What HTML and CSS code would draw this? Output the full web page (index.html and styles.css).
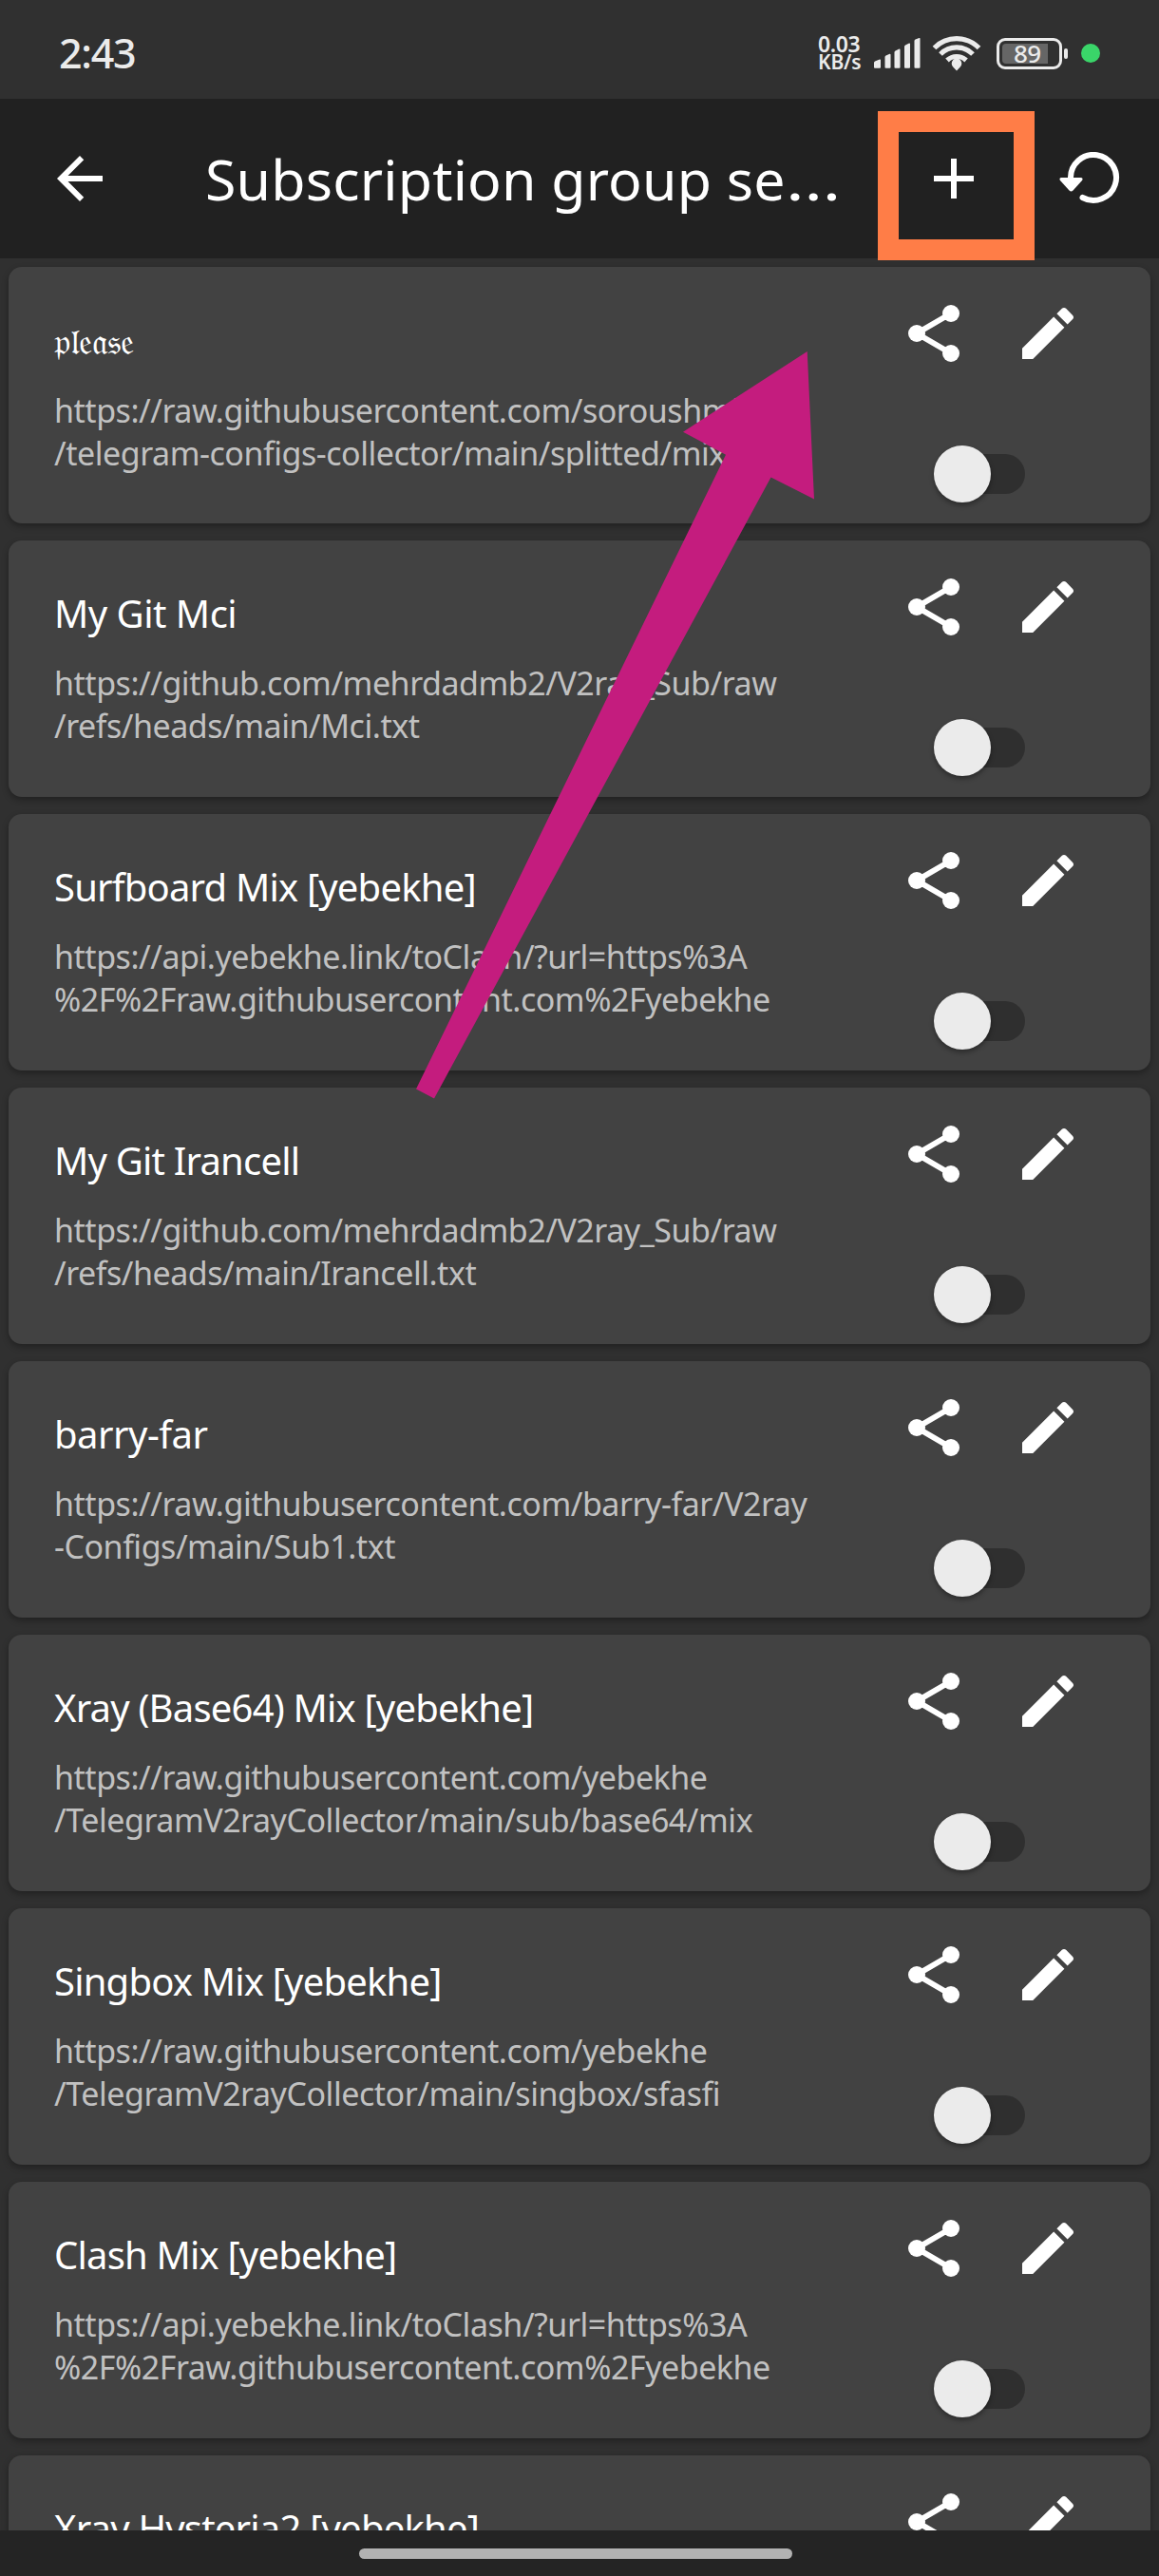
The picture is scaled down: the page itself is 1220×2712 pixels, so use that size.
FILE: index.html
```html
<!DOCTYPE html>
<html lang="en">
<head>
<meta charset="utf-8">
<title>Subscription group setting</title>
<link rel="stylesheet" href="styles.css">
</head>
<body>
<svg class="defs" aria-hidden="true">
  <symbol id="share" viewBox="0 0 24 24"><path d="M18 5L6 12l12 7" fill="none" stroke="currentColor" stroke-width="2"/><circle cx="18" cy="5" r="3"/><circle cx="6" cy="12" r="3"/><circle cx="18" cy="19" r="3"/></symbol>
  <symbol id="edit" viewBox="0 0 24 24"><path d="M3 17.250V21h3.750L17.810 9.940l-3.750-3.750L3 17.250zM20.710 7.040c.39-.39.39-1.020 0-1.410l-2.340-2.340c-.39-.39-1.020-.39-1.410 0l-1.830 1.830 3.750 3.750 1.830-1.830z"/></symbol>
</svg>

<div class="status">
  <span class="clock">2:43</span>
  <span class="speed"><span>0.03</span><span class="unit">KB/s</span></span>
  <svg class="signal" width="49" height="32" viewBox="0 0 49 32"><path d="M0 31v-5q0-1 1-1.500l5-2q1-.3 1 1V31q0 .8-1 .8H1Q0 31.800 0 31zM11.500 31V20q0-1 1-1.500l4-1.800q1-.3 1 1V31q0 .8-1 .8h-4q-1 0-1-.8zM21.500 31V15q0-1 1-1.500l4-2q1-.3 1 1V31q0 .8-1 .8h-4q-1 0-1-.8zM32 31V9q0-1 1-1.500l4-2q1-.3 1 1V31q0 .8-1 .8h-4q-1 0-1-.8zM42.500 31V3q0-1 1-1.500l4-1.500q1-.3 1 1V31q0 .8-1 .8h-4q-1 0-1-.8z"/></svg>
  <svg class="wifi" width="52" height="38" viewBox="0 0 52 38"><g fill="none" stroke="currentColor" stroke-width="5.200"><path d="M2.500 13.500a33 33 0 0 1 47 0"/><path d="M9 20a24 24 0 0 1 34 0"/><path d="M16 26.500a14.500 14.500 0 0 1 20 0"/></g><path d="M26 37.500l-4-4.200a5.300 5.300 0 1 1 8 0z"/></svg>
  <span class="battery"><span class="level">89</span></span>
  <span class="dot"></span>
</div>

<header class="bar">
  <svg class="icon back" viewBox="0 0 24 24"><path d="M20 11H7.830l5.590-5.590L12 4l-8 8 8 8 1.410-1.410L7.830 13H20v-2z"/></svg>
  <h1>Subscription group se<span class="dots">…</span></h1>
  <svg class="icon" viewBox="0 0 24 24"><path d="M19 13h-6v6h-2v-6H5v-2h6V5h2v6h6v2z"/></svg>
  <svg class="restore" width="64" height="56" viewBox="0 0 64 56"><path d="M12 28a24 24 0 1 1 12.500 20.500" fill="none" stroke="currentColor" stroke-width="6" stroke-linecap="round" transform="translate(0 -.5)"/><path d="M2 27h21q2.500.5 1 3l-9.500 10.500q-2 2-4 0L1 30q-1.500-2.500 1-3z"/></svg>
</header>

<main class="list">
  <article class="card">
    <div class="text"><h2 class="fraktur">𝔭𝔩𝔢𝔞𝔰𝔢</h2><p>https://raw.githubusercontent.com/soroushmi<br>/telegram-configs-collector/main/splitted/mix</p></div>
    <div class="actions"><svg class="icon"><use href="#share"/></svg><svg class="icon"><use href="#edit"/></svg><span class="toggle"></span></div>
  </article>
  <article class="card">
    <div class="text"><h2 class="loose">My Git Mci</h2><p>https://github.com/mehrdadmb2/V2ray_Sub/raw<br>/refs/heads/main/Mci.txt</p></div>
    <div class="actions"><svg class="icon"><use href="#share"/></svg><svg class="icon"><use href="#edit"/></svg><span class="toggle"></span></div>
  </article>
  <article class="card">
    <div class="text"><h2>Surfboard Mix [yebekhe]</h2><p>https://api.yebekhe.link/toClash/?url=https%3A<br>%2F%2Fraw.githubusercontent.com%2Fyebekhe</p></div>
    <div class="actions"><svg class="icon"><use href="#share"/></svg><svg class="icon"><use href="#edit"/></svg><span class="toggle"></span></div>
  </article>
  <article class="card">
    <div class="text"><h2>My Git Irancell</h2><p>https://github.com/mehrdadmb2/V2ray_Sub/raw<br>/refs/heads/main/Irancell.txt</p></div>
    <div class="actions"><svg class="icon"><use href="#share"/></svg><svg class="icon"><use href="#edit"/></svg><span class="toggle"></span></div>
  </article>
  <article class="card">
    <div class="text"><h2 class="loose">barry-far</h2><p>https://raw.githubusercontent.com/barry-far/V2ray<br>-Configs/main/Sub1.txt</p></div>
    <div class="actions"><svg class="icon"><use href="#share"/></svg><svg class="icon"><use href="#edit"/></svg><span class="toggle"></span></div>
  </article>
  <article class="card">
    <div class="text"><h2>Xray (Base64) Mix [yebekhe]</h2><p>https://raw.githubusercontent.com/yebekhe<br>/TelegramV2rayCollector/main/sub/base64/mix</p></div>
    <div class="actions"><svg class="icon"><use href="#share"/></svg><svg class="icon"><use href="#edit"/></svg><span class="toggle"></span></div>
  </article>
  <article class="card">
    <div class="text"><h2>Singbox Mix [yebekhe]</h2><p>https://raw.githubusercontent.com/yebekhe<br>/TelegramV2rayCollector/main/singbox/sfasfi</p></div>
    <div class="actions"><svg class="icon"><use href="#share"/></svg><svg class="icon"><use href="#edit"/></svg><span class="toggle"></span></div>
  </article>
  <article class="card">
    <div class="text"><h2>Clash Mix [yebekhe]</h2><p>https://api.yebekhe.link/toClash/?url=https%3A<br>%2F%2Fraw.githubusercontent.com%2Fyebekhe</p></div>
    <div class="actions"><svg class="icon"><use href="#share"/></svg><svg class="icon"><use href="#edit"/></svg><span class="toggle"></span></div>
  </article>
  <article class="card">
    <div class="text"><h2>Xray Hysteria2 [yebekhe]</h2></div>
    <div class="actions"><svg class="icon"><use href="#share"/></svg><svg class="icon"><use href="#edit"/></svg><span class="toggle"></span></div>
  </article>
</main>

<div class="nav"><span class="handle"></span></div>

<div class="highlight"></div>
<svg class="pointer" viewBox="438 370 419 787"><path d="M849.700 370L857 525.500l-45.500-23L457 1156.600l-19-10L764 478.700l-45-24z"/></svg>
</body>
</html>
```
FILE: styles.css
```css
* { box-sizing: border-box; margin: 0; padding: 0; }

body {
  position: relative;
  display: flex;
  flex-direction: column;
  width: 1220px;
  height: 2712px;
  overflow: hidden;
  background: #303030;
  color: #fff;
  font-family: "Noto Sans", sans-serif;
}

svg { display: block; flex: none; fill: currentColor; }
.defs { position: absolute; width: 0; height: 0; }
.icon { width: 72px; height: 72px; }

/* status bar */
.status {
  display: flex;
  align-items: center;
  flex: none;
  height: 104px;
  padding: 8px 62px 0 62px;
  color: #ebebeb;
}
.clock { flex: 1; font-size: 43px; line-height: 50px; font-weight: 500; letter-spacing: -1.3px; }
.speed {
  display: flex;
  flex-direction: column;
  width: 59px;
  font-size: 23px;
  font-weight: 600;
  line-height: 19px;
  letter-spacing: -.4px;
}
.speed .unit { font-size: 21px; letter-spacing: -.2px; }
.signal { margin-right: 12px; }
.wifi { margin-right: 16px; }
.battery {
  position: relative;
  width: 69px;
  height: 33px;
  padding: 3px;
  border: 3px solid #ebebeb;
  border-radius: 9px;
}
.battery::after {
  content: "";
  position: absolute;
  left: 68px;
  top: 8px;
  width: 4px;
  height: 11px;
  border-radius: 2px;
  background: #ebebeb;
}
.level {
  display: block;
  width: 48px;
  height: 21px;
  padding-left: 12px;
  border-radius: 4px 0 0 4px;
  background: #666;
  font-size: 26px;
  font-weight: 500;
  line-height: 21px;
  letter-spacing: -.6px;
}
.dot { width: 20px; height: 20px; margin-left: 20px; border-radius: 50%; background: #3ad569; }

/* app bar */
.bar {
  display: flex;
  align-items: center;
  flex: none;
  height: 168px;
  padding: 0 41px 0 48px;
  background: #212121;
}
.bar h1 {
  width: 752px;
  margin-left: 96px;
  margin-right: 0;
  font-size: 59px;
  font-weight: 400;
  line-height: 80px;
  letter-spacing: .2px;
  white-space: nowrap;
}
.bar .dots { display: inline-block; transform: scaleX(1.250); transform-origin: left; }
.restore { margin-left: auto; }

/* subscription cards */
.list {
  display: flex;
  flex-direction: column;
  gap: 18px;
  flex: 1;
  min-height: 0;
  padding: 9px 9px 0;
  overflow: hidden;
}
.card {
  display: flex;
  justify-content: space-between;
  flex: none;
  height: 270px;
  border-radius: 14px;
  background: #424242;
  box-shadow: 0 3px 7px rgba(0, 0, 0, .32);
}
.text { padding: 49px 0 0 48px; white-space: nowrap; }
.text h2 { font-size: 40px; font-weight: 400; line-height: 56px; letter-spacing: -.8px; }
.text h2.loose { letter-spacing: -.5px; }
.text h2.fraktur { height: 57px; font-size: 38px; letter-spacing: -.5px; }
.text p { margin-top: 23px; color: #c1c1c1; font-size: 34px; line-height: 45px; letter-spacing: -.47px; }

.actions {
  display: grid;
  grid-template-columns: 72px 72px;
  grid-template-rows: 72px 60px;
  column-gap: 48px;
  row-gap: 82px;
  padding: 34px 72px 0 0;
}
.toggle {
  position: relative;
  grid-column: 1 / -1;
  width: 86px;
  height: 42px;
  margin: 9px 0 0 46px;
  border-radius: 21px;
  background: #2f2f2f;
}
.toggle::before {
  content: "";
  position: absolute;
  left: -10px;
  top: -9px;
  width: 60px;
  height: 60px;
  border-radius: 50%;
  background: #ebebeb;
  box-shadow: 0 3px 5px rgba(0, 0, 0, .35);
}

/* gesture bar */
.nav { display: flex; justify-content: center; flex: none; height: 48px; padding-top: 19px; padding-right: 8px; background: #242424; }
.handle { width: 456px; height: 11px; border-radius: 6px; background: #b2b2b2; }

/* annotations */
.highlight { position: absolute; left: 924px; top: 117px; width: 165px; height: 157px; border: 22px solid #ff7d47; }
.pointer { position: absolute; left: 438px; top: 370px; width: 419px; height: 787px; color: #c41c7e; }
```
